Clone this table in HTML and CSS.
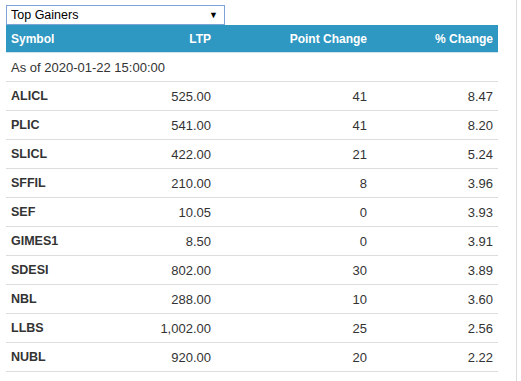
FILE: index.html
```html
<!DOCTYPE html>
<html>
<head>
<meta charset="utf-8">
<link rel="stylesheet" href="styles.css">
</head>
<body>
<div class="panel">
  <div class="select">
    <span>Top Gainers</span>
    <span class="arrow">&#9660;</span>
  </div>
  <table class="gainers">
    <colgroup>
      <col class="c1"><col class="c2"><col class="c3"><col class="c4">
    </colgroup>
    <thead>
      <tr><th class="l">Symbol</th><th>LTP</th><th>Point Change</th><th>% Change</th></tr>
    </thead>
    <tbody>
      <tr><td class="l asof" colspan="4">As of 2020-01-22 15:00:00</td></tr>
      <tr><td class="l sym">ALICL</td><td>525.00</td><td>41</td><td>8.47</td></tr>
      <tr><td class="l sym">PLIC</td><td>541.00</td><td>41</td><td>8.20</td></tr>
      <tr><td class="l sym">SLICL</td><td>422.00</td><td>21</td><td>5.24</td></tr>
      <tr><td class="l sym">SFFIL</td><td>210.00</td><td>8</td><td>3.96</td></tr>
      <tr><td class="l sym">SEF</td><td>10.05</td><td>0</td><td>3.93</td></tr>
      <tr><td class="l sym">GIMES1</td><td>8.50</td><td>0</td><td>3.91</td></tr>
      <tr><td class="l sym">SDESI</td><td>802.00</td><td>30</td><td>3.89</td></tr>
      <tr><td class="l sym">NBL</td><td>288.00</td><td>10</td><td>3.60</td></tr>
      <tr><td class="l sym">LLBS</td><td>1,002.00</td><td>25</td><td>2.56</td></tr>
      <tr><td class="l sym">NUBL</td><td>920.00</td><td>20</td><td>2.22</td></tr>
    </tbody>
  </table>
</div>
</body>
</html>
```
FILE: styles.css
```css
html, body {
  margin: 0;
  padding: 0;
  background: #fff;
}
body {
  font-family: "Liberation Sans", Arial, sans-serif;
  font-size: 13px;
  color: #333;
}
.panel {
  width: 517px;
  height: 381px;
  padding: 5px 0 0 6px;
  box-sizing: border-box;
  border-right: 1px solid #dcdcdc;
}
.select {
  width: 219px;
  height: 20px;
  box-sizing: border-box;
  border: 1px solid #7ea4d6;
  display: flex;
  align-items: center;
  justify-content: space-between;
  padding: 0 6px 0 4px;
  color: #000;
  font-size: 12.5px;
}
.arrow {
  font-size: 9px;
}
.gainers {
  border-collapse: collapse;
  width: 492px;
  table-layout: fixed;
}
.c1 { width: 120px; }
.c2 { width: 90px; }
.c3 { width: 156px; }
.c4 { width: 126px; }
th {
  background: #2e97c2;
  color: #fff;
  font-weight: bold;
  font-size: 12px;
  height: 27px;
  padding: 0 5px;
  text-align: right;
  border-bottom: 1px solid #cfe3ee;
}
td {
  height: 28px;
  padding: 0 5px;
  text-align: right;
  border-bottom: 1px solid #dddddd;
}
.l { text-align: left; }
.sym { font-weight: bold; font-size: 12.5px; color: #333; }
.asof { color: #333; }
```
